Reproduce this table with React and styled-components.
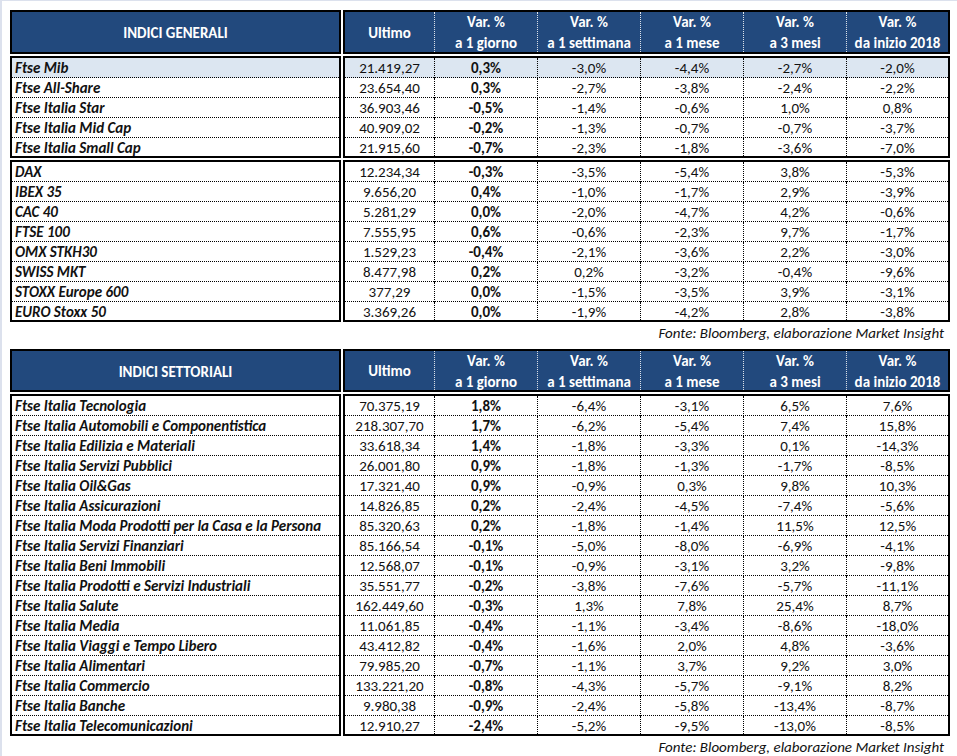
import React from "react";
import styled, { createGlobalStyle } from "styled-components";

const FONT = `"Carlito", "Lato", "Liberation Sans", sans-serif`;
const HEAD_BG = "#22497d";
const INK = "#111111";

const Global = createGlobalStyle`
  html, body { margin: 0; padding: 0; background: #ffffff; }
  body { font-family: ${FONT}; color: ${INK}; }
`;

const Page = styled.div`
  width: 957px;
  height: 756px;
  box-sizing: border-box;
  border-left: 2px solid #dce1ed;
  border-top: 1px solid #dce1ed;
  padding: 9px 0 0 8px;
  font-size: 15px;
  overflow: hidden;
`;

const Table = styled.div`
  width: 940px;
  display: flex;
  flex-direction: column;
  gap: 2px;
`;

const Band = styled.div`
  display: flex;
  gap: 2px;
`;

const NameBox = styled.div`
  width: 331px;
  box-sizing: border-box;
  border: 2px solid #000;
  display: flex;
  flex-direction: column;
  background: ${(p) => (p.$head ? HEAD_BG : "#fff")};
`;

const DataBox = styled.div`
  width: 607px;
  box-sizing: border-box;
  border: 2px solid #000;
  display: flex;
  flex-direction: column;
  background: ${(p) => (p.$head ? HEAD_BG : "#fff")};
`;

const HeadTitle = styled.div`
  height: ${(p) => p.$h}px;
  display: flex;
  align-items: center;
  justify-content: center;
  color: #fff;
  font-weight: 700;
  padding-top: 2px;
  box-sizing: border-box;
`;

const DataGrid = styled.div`
  display: grid;
  grid-template-columns: 90px repeat(4, 103px) 1fr;
`;

const HeadCell = styled.div`
  height: ${(p) => p.$h}px;
  box-sizing: border-box;
  display: flex;
  flex-direction: column;
  align-items: center;
  justify-content: center;
  padding-top: 2px;
  color: #fff;
  font-weight: 700;
  line-height: 21px;
  white-space: nowrap;
  border-right: 1px dotted rgba(255, 255, 255, 0.85);
  &:last-child { border-right: none; }
`;

const NameRow = styled.div`
  height: 20px;
  box-sizing: border-box;
  border-bottom: 1px dotted #000;
  padding: 1px 0 0 3px;
  font-weight: 700;
  font-style: italic;
  line-height: 19px;
  white-space: nowrap;
  background: ${(p) => (p.$hl ? "#dce6f1" : "transparent")};
  &:last-child { border-bottom: none; height: 18px; }
`;

const DataRow = styled(DataGrid)`
  height: 20px;
  box-sizing: border-box;
  border-bottom: 1px dotted #000;
  background: ${(p) => (p.$hl ? "#dce6f1" : "transparent")};
  &:last-child { border-bottom: none; height: 18px; }
`;

const Cell = styled.div`
  text-align: center;
  padding-top: 1px;
  line-height: 19px;
  white-space: nowrap;
  font-weight: ${(p) => (p.$bold ? 700 : 400)};
  border-right: 1px dotted #000;
  &:last-child { border-right: none; }
`;

const Source = styled.div`
  width: 940px;
  height: ${(p) => p.$h}px;
  box-sizing: border-box;
  padding-right: 6px;
  text-align: right;
  font-style: italic;
  line-height: 22px;
`;

const HEAD_COLS = [
  ["Var. %", "a 1 giorno"],
  ["Var. %", "a 1 settimana"],
  ["Var. %", "a 1 mese"],
  ["Var. %", "a 3 mesi"],
  ["Var. %", "da inizio 2018"],
];

const GEN1 = [
  ["Ftse Mib", "21.419,27", "0,3%", "-3,0%", "-4,4%", "-2,7%", "-2,0%"],
  ["Ftse All-Share", "23.654,40", "0,3%", "-2,7%", "-3,8%", "-2,4%", "-2,2%"],
  ["Ftse Italia Star", "36.903,46", "-0,5%", "-1,4%", "-0,6%", "1,0%", "0,8%"],
  ["Ftse Italia Mid Cap", "40.909,02", "-0,2%", "-1,3%", "-0,7%", "-0,7%", "-3,7%"],
  ["Ftse Italia Small Cap", "21.915,60", "-0,7%", "-2,3%", "-1,8%", "-3,6%", "-7,0%"],
];

const GEN2 = [
  ["DAX", "12.234,34", "-0,3%", "-3,5%", "-5,4%", "3,8%", "-5,3%"],
  ["IBEX 35", "9.656,20", "0,4%", "-1,0%", "-1,7%", "2,9%", "-3,9%"],
  ["CAC 40", "5.281,29", "0,0%", "-2,0%", "-4,7%", "4,2%", "-0,6%"],
  ["FTSE 100", "7.555,95", "0,6%", "-0,6%", "-2,3%", "9,7%", "-1,7%"],
  ["OMX STKH30", "1.529,23", "-0,4%", "-2,1%", "-3,6%", "2,2%", "-3,0%"],
  ["SWISS MKT", "8.477,98", "0,2%", "0,2%", "-3,2%", "-0,4%", "-9,6%"],
  ["STOXX Europe 600", "377,29", "0,0%", "-1,5%", "-3,5%", "3,9%", "-3,1%"],
  ["EURO Stoxx 50", "3.369,26", "0,0%", "-1,9%", "-4,2%", "2,8%", "-3,8%"],
];

const SECT = [
  ["Ftse Italia Tecnologia", "70.375,19", "1,8%", "-6,4%", "-3,1%", "6,5%", "7,6%"],
  ["Ftse Italia Automobili e Componentistica", "218.307,70", "1,7%", "-6,2%", "-5,4%", "7,4%", "15,8%"],
  ["Ftse Italia Edilizia e Materiali", "33.618,34", "1,4%", "-1,8%", "-3,3%", "0,1%", "-14,3%"],
  ["Ftse Italia Servizi Pubblici", "26.001,80", "0,9%", "-1,8%", "-1,3%", "-1,7%", "-8,5%"],
  ["Ftse Italia Oil&Gas", "17.321,40", "0,9%", "-0,9%", "0,3%", "9,8%", "10,3%"],
  ["Ftse Italia Assicurazioni", "14.826,85", "0,2%", "-2,4%", "-4,5%", "-7,4%", "-5,6%"],
  ["Ftse Italia Moda Prodotti per la Casa e la Persona", "85.320,63", "0,2%", "-1,8%", "-1,4%", "11,5%", "12,5%"],
  ["Ftse Italia Servizi Finanziari", "85.166,54", "-0,1%", "-5,0%", "-8,0%", "-6,9%", "-4,1%"],
  ["Ftse Italia Beni Immobili", "12.568,07", "-0,1%", "-0,9%", "-3,1%", "3,2%", "-9,8%"],
  ["Ftse Italia Prodotti e Servizi Industriali", "35.551,77", "-0,2%", "-3,8%", "-7,6%", "-5,7%", "-11,1%"],
  ["Ftse Italia Salute", "162.449,60", "-0,3%", "1,3%", "7,8%", "25,4%", "8,7%"],
  ["Ftse Italia Media", "11.061,85", "-0,4%", "-1,1%", "-3,4%", "-8,6%", "-18,0%"],
  ["Ftse Italia Viaggi e Tempo Libero", "43.412,82", "-0,4%", "-1,6%", "2,0%", "4,8%", "-3,6%"],
  ["Ftse Italia Alimentari", "79.985,20", "-0,7%", "-1,1%", "3,7%", "9,2%", "3,0%"],
  ["Ftse Italia Commercio", "133.221,20", "-0,8%", "-4,3%", "-5,7%", "-9,1%", "8,2%"],
  ["Ftse Italia Banche", "9.980,38", "-0,9%", "-2,4%", "-5,8%", "-13,4%", "-8,7%"],
  ["Ftse Italia Telecomunicazioni", "12.910,27", "-2,4%", "-5,2%", "-9,5%", "-13,0%", "-8,5%"],
];

function Header({ title, h }) {
  return (
    <Band>
      <NameBox $head>
        <HeadTitle $h={h}>{title}</HeadTitle>
      </NameBox>
      <DataBox $head>
        <DataGrid>
          <HeadCell $h={h}>Ultimo</HeadCell>
          {HEAD_COLS.map(([a, b], i) => (
            <HeadCell key={i} $h={h}>
              <span>{a}</span>
              <span>{b}</span>
            </HeadCell>
          ))}
        </DataGrid>
      </DataBox>
    </Band>
  );
}

function Group({ rows, highlightFirst }) {
  return (
    <Band>
      <NameBox>
        {rows.map((r, i) => (
          <NameRow key={i} $hl={highlightFirst && i === 0}>
            {r[0]}
          </NameRow>
        ))}
      </NameBox>
      <DataBox>
        {rows.map((r, i) => (
          <DataRow key={i} $hl={highlightFirst && i === 0}>
            {r.slice(1).map((v, j) => (
              <Cell key={j} $bold={j === 1}>
                {v}
              </Cell>
            ))}
          </DataRow>
        ))}
      </DataBox>
    </Band>
  );
}

export default function App() {
  return (
    <>
      <Global />
      <Page>
        <Table>
          <Header title="INDICI GENERALI" h={40} />
          <Group rows={GEN1} highlightFirst />
          <Group rows={GEN2} />
        </Table>
        <Source $h={27}>Fonte: Bloomberg, elaborazione Market Insight</Source>
        <Table>
          <Header title="INDICI SETTORIALI" h={39} />
          <Group rows={SECT} />
        </Table>
        <Source $h={22}>Fonte: Bloomberg, elaborazione Market Insight</Source>
      </Page>
    </>
  );
}
